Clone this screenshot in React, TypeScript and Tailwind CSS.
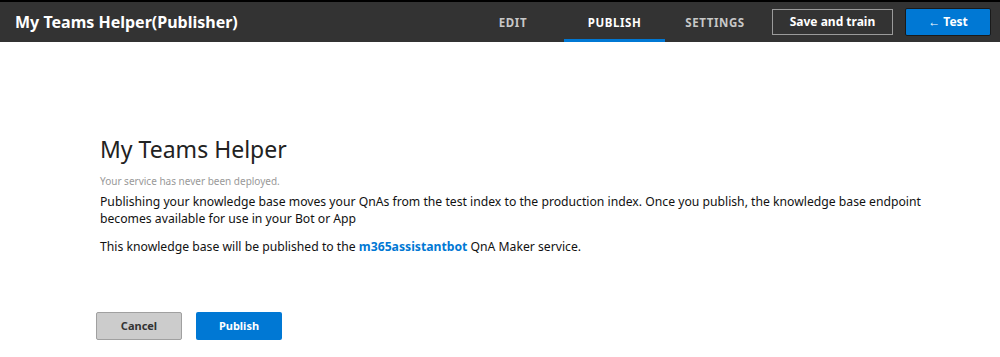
export default function App() {
  return (
    <div className="w-[1000px] h-[357px] bg-white overflow-hidden" style={{ fontFamily: '"Noto Sans", "Open Sans", sans-serif' }}>
      <header className="h-[42px] bg-[#333333] border-t-2 border-black flex items-stretch">
        <h1 className="pl-[15px] text-white font-bold text-[16px] leading-none flex items-center">
          My Teams Helper(Publisher)
        </h1>
        <nav className="ml-auto flex items-stretch text-[11.5px] font-bold tracking-[0.6px]">
          <a className="w-[64px] flex items-center justify-center text-[#c8c8c8] mr-[19px] pt-[1px]">EDIT</a>
          <a className="w-[101px] flex items-center justify-center text-white border-b-[3px] border-[#0078d4] pt-[4px]">PUBLISH</a>
          <a className="w-[100px] flex items-center justify-center text-[#c8c8c8] mr-[7px] pt-[1px]">SETTINGS</a>
        </nav>
        <div className="flex items-center gap-[12px] pr-[9px]">
          <button className="w-[121px] h-[26px] border border-[#9a9a9a] text-white font-bold text-[12px]">Save and train</button>
          <button className="w-[86px] h-[28px] bg-[#0078d4] border border-[#1a1a1a] rounded-[2px] text-white font-bold text-[12px]">← Test</button>
        </div>
      </header>
      <main className="pl-[100px] pt-[96px]">
        <h2 className="text-[23px] text-[#222] leading-none">My Teams Helper</h2>
        <p className="mt-[13px] text-[10px] text-[#999]">Your service has never been deployed.</p>
        <p className="mt-[4px] text-[12.2px] text-[#111] leading-[17px] w-[830px]">
          Publishing your knowledge base moves your QnAs from the test index to the production index. Once you publish, the knowledge base endpoint becomes available for use in your Bot or App
        </p>
        <p className="mt-[11px] text-[12.2px] text-[#111] leading-[17px]">
          This knowledge base will be published to the <a className="text-[#0078d4] font-bold">m365assistantbot</a> QnA Maker service.
        </p>
      </main>
      <div className="pl-[96px] mt-[57px] flex gap-[14px]">
        <button className="w-[86px] h-[28px] bg-[#cccccc] border border-[#a0a0a0] rounded-[2px] text-[#333] font-bold text-[11px]">Cancel</button>
        <button className="w-[86px] h-[28px] bg-[#0078d4] rounded-[2px] text-white font-bold text-[11px]">Publish</button>
      </div>
    </div>
  );
}
